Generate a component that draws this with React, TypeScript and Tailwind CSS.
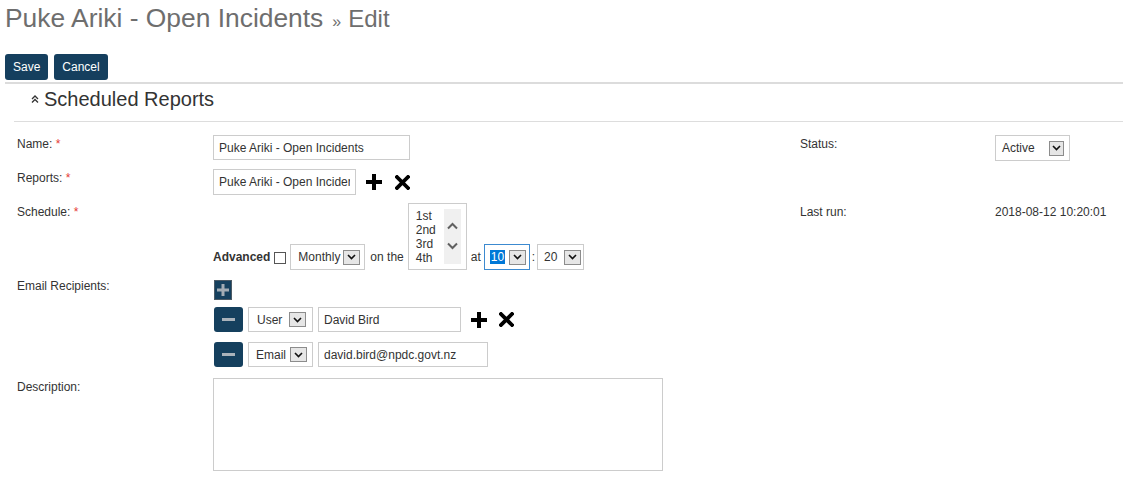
import React from 'react';

function DropBtn({ className = 'w-[17px] h-[15px]' }: { className?: string }) {
  return (
    <span className={`flex items-center justify-center border border-[#8c8c8c] bg-[#e6e6e6] ${className}`}>
      <svg width="9" height="6" viewBox="0 0 9 6">
        <polyline points="1,1 4.5,4.6 8,1" fill="none" stroke="#111" strokeWidth="1.6" />
      </svg>
    </span>
  );
}

function PlusIcon() {
  return (
    <svg width="16" height="16" viewBox="0 0 16 16">
      <rect x="6" y="0" width="4" height="16" fill="#000" />
      <rect x="0" y="6" width="16" height="4" fill="#000" />
    </svg>
  );
}

function TimesIcon() {
  return (
    <svg width="15" height="15" viewBox="0 0 15 15">
      <path d="M2 2 L13 13 M13 2 L2 13" stroke="#000" strokeWidth="3.8" strokeLinecap="square" />
    </svg>
  );
}

function MinusButton() {
  return (
    <button className="flex h-[25px] w-[29px] items-center justify-center rounded-[3px] bg-[#15405e]">
      <span className="block h-[3px] w-[13px] bg-[#aab3bb]" />
    </button>
  );
}

export default function App() {
  return (
    <div className="min-h-screen bg-white px-[5px] font-['Liberation_Sans',Arial,sans-serif] text-[12px] text-[#333]">
      {/* Title */}
      <h1 className="mt-[3px] flex h-[30px] items-baseline whitespace-nowrap font-normal text-[#6e6e6e]">
        <span className="text-[26.4px] leading-[30px]">Puke Ariki - Open Incidents</span>
        <span className="ml-[9px] text-[16px] leading-[30px]">»</span>
        <span className="ml-[7px] text-[24px] leading-[30px]">Edit</span>
      </h1>

      {/* Actions */}
      <div className="mt-[21px] flex gap-[6px]">
        <button className="h-[26px] rounded-[3px] bg-[#153f5e] px-[8px] text-[12px] text-white">Save</button>
        <button className="h-[26px] rounded-[3px] bg-[#153f5e] px-[8px] text-[12px] text-white">Cancel</button>
      </div>
      <div className="mt-[2px] h-[2px] bg-[#dcdcdc]" />

      <div className="ml-[9px]">
        {/* Section header */}
        <div className="mt-[3px] flex items-center border-b border-[#dddddd] pb-[10px] pl-[17px]">
          <svg width="8" height="8" viewBox="0 0 8 8">
            <polyline points="1,4 4,1 7,4" fill="none" stroke="#333" strokeWidth="1.3" />
            <polyline points="1,7.5 4,4.5 7,7.5" fill="none" stroke="#333" strokeWidth="1.3" />
          </svg>
          <span className="ml-[5px] text-[20px] leading-[24px] text-[#333]">Scheduled Reports</span>
        </div>

        {/* Form */}
        <div className="mt-[13px] pl-[3px]">
          {/* Name / Status */}
          <div className="flex">
            <div className="w-[196px] pt-[2px] leading-[14px]">
              Name: <span className="text-[#e53935]">*</span>
            </div>
            <div className="w-[587px]">
              <input
                readOnly
                value="Puke Ariki - Open Incidents"
                className="h-[25px] w-[197px] border border-[#cccccc] px-[5px] text-[12px] text-[#333] outline-none"
              />
            </div>
            <div className="w-[195px] pt-[2px] leading-[14px]">Status:</div>
            <div className="flex h-[26px] w-[75px] items-center justify-between border border-[#cccccc] pl-[6px] pr-[5px]">
              <span>Active</span>
              <DropBtn className="h-[15px] w-[15px]" />
            </div>
          </div>

          {/* Reports */}
          <div className="mt-[8px] flex">
            <div className="w-[196px] pt-[2px] leading-[14px]">
              Reports: <span className="text-[#e53935]">*</span>
            </div>
            <div className="flex items-center">
              <input
                readOnly
                value="Puke Ariki - Open Incidents"
                className="h-[26px] w-[143px] border border-[#cccccc] px-[5px] text-[12px] text-[#333] outline-none"
              />
              <span className="ml-[10px] flex">
                <PlusIcon />
              </span>
              <span className="ml-[13px] flex">
                <TimesIcon />
              </span>
            </div>
          </div>

          {/* Schedule / Last run */}
          <div className="mt-[8px] flex">
            <div className="w-[196px] pt-[2px] leading-[14px]">
              Schedule: <span className="text-[#e53935]">*</span>
            </div>
            <div className="flex w-[587px] items-end">
              <span className="flex h-[26px] items-center font-bold">Advanced</span>
              <span className="mb-[6px] ml-[4px] h-[12px] w-[12px] border border-[#555] bg-white" />
              <div className="ml-[4px] flex h-[26px] w-[75px] items-center justify-between border border-[#cccccc] pl-[7px] pr-[4px]">
                <span>Monthly</span>
                <DropBtn />
              </div>
              <span className="ml-[5px] flex h-[26px] items-center">on the</span>
              <div className="ml-[4px] flex h-[67px] w-[59px] border border-[#cccccc] bg-white pl-[7px] pt-[5px]">
                <div className="w-[28px] leading-[14px]">
                  1st
                  <br />
                  2nd
                  <br />
                  3rd
                  <br />
                  4th
                </div>
                <div className="flex h-[55px] w-[17px] flex-col items-center bg-[#f0f0f0] pt-[13px]">
                  <svg width="11" height="8" viewBox="0 0 11 8">
                    <polyline points="1,6.5 5.5,2 10,6.5" fill="none" stroke="#606060" strokeWidth="2" />
                  </svg>
                  <svg className="mt-[12px]" width="11" height="8" viewBox="0 0 11 8">
                    <polyline points="1,1.5 5.5,6 10,1.5" fill="none" stroke="#606060" strokeWidth="2" />
                  </svg>
                </div>
              </div>
              <span className="ml-[4px] flex h-[26px] items-center">at</span>
              <div className="ml-[3px] flex h-[26px] w-[46px] items-center justify-between border border-[#3c8ad0] pl-[5px] pr-[3px]">
                <span className="bg-[#0078d7] px-[1px] leading-[14px] text-white">10</span>
                <DropBtn />
              </div>
              <span className="ml-[2px] flex h-[26px] items-center">:</span>
              <div className="ml-[2px] flex h-[26px] w-[47px] items-center justify-between border border-[#cccccc] pl-[6px] pr-[2px]">
                <span>20</span>
                <DropBtn />
              </div>
            </div>
            <div className="w-[195px] pt-[2px] leading-[14px]">Last run:</div>
            <div className="pt-[2px] leading-[14px]">2018-08-12 10:20:01</div>
          </div>

          {/* Email recipients */}
          <div className="mt-[9px] flex">
            <div className="w-[196px] leading-[14px]">Email Recipients:</div>
            <div className="flex flex-col">
              <button className="ml-[1px] mt-[1px] flex h-[20px] w-[18px] items-center justify-center border border-[#4d5b66] bg-[#15405e]">
                <svg width="12" height="12" viewBox="0 0 12 12">
                  <rect x="4.5" y="0" width="3" height="12" fill="#a3acb4" />
                  <rect x="0" y="4.5" width="12" height="3" fill="#a3acb4" />
                </svg>
              </button>
              <div className="ml-[1px] mt-[7px] flex items-center">
                <MinusButton />
                <div className="ml-[5px] flex h-[25px] w-[65px] items-center justify-between border border-[#cccccc] pl-[8px] pr-[6px]">
                  <span>User</span>
                  <DropBtn />
                </div>
                <input
                  readOnly
                  value="David Bird"
                  className="ml-[5px] h-[25px] w-[143px] border border-[#cccccc] px-[5px] text-[12px] text-[#333] outline-none"
                />
                <span className="ml-[10px] flex">
                  <PlusIcon />
                </span>
                <span className="ml-[12px] flex">
                  <TimesIcon />
                </span>
              </div>
              <div className="ml-[1px] mt-[10px] flex items-center">
                <MinusButton />
                <div className="ml-[5px] flex h-[25px] w-[65px] items-center justify-between border border-[#cccccc] pl-[7px] pr-[5px]">
                  <span>Email</span>
                  <DropBtn />
                </div>
                <input
                  readOnly
                  value="david.bird@npdc.govt.nz"
                  className="ml-[5px] h-[25px] w-[170px] border border-[#cccccc] px-[5px] text-[12px] text-[#333] outline-none"
                />
              </div>
            </div>
          </div>

          {/* Description */}
          <div className="mt-[11px] flex">
            <div className="w-[196px] pt-[2px] leading-[14px]">Description:</div>
            <textarea
              readOnly
              className="h-[93px] w-[450px] resize-none border border-[#cccccc] outline-none"
            />
          </div>
        </div>
      </div>
    </div>
  );
}
